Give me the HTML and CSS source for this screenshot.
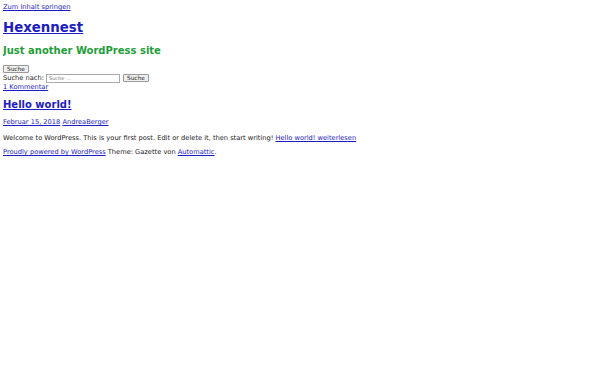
FILE: index.html
```html
<!DOCTYPE html>
<html lang="de">
<head>
    <meta charset="UTF-8">
    <meta name="viewport" content="width=device-width, initial-scale=1.0">
    <title>Hexennest – Just another WordPress site</title>
    <link rel="stylesheet" href="styles.css">
</head>
<body>
    <a class="skip-link" href="#content">Zum Inhalt springen</a>

    <header class="site-header">
        <h1 class="site-title"><a href="#">Hexennest</a></h1>
        <h2 class="site-description">Just another WordPress site</h2>
    </header>

    <div class="search-toggle">
        <button type="button">Suche</button>
    </div>
    <form class="search-form" role="search">
        <label for="s">Suche nach:</label>
        <input type="search" id="s" placeholder="Suche …">
        <button type="submit">Suche</button>
    </form>

    <main id="content">
        <article class="post">
            <a class="comments-link" href="#">1 Kommentar</a>
            <h2 class="entry-title"><a href="#">Hello world!</a></h2>
            <div class="entry-meta">
                <a href="#">Februar 15, 2018</a> <a href="#">AndreaBerger</a>
            </div>
            <p class="entry-summary">Welcome to WordPress. This is your first post. Edit or delete it, then start writing! <a href="#">Hello world! weiterlesen</a></p>
        </article>
    </main>

    <footer class="site-footer">
        <a href="#">Proudly powered by WordPress</a> Theme: Gazette von <a href="#">Automattic</a>.
    </footer>
</body>
</html>
```

FILE: styles.css
```css
body {
    margin: 3px;
    font-family: "DejaVu Sans", sans-serif;
    font-size: 6.67px;
    color: #1a1a1a;
    background: #fff;
}

a {
    color: #1c1cc4;
}

.skip-link {
    display: block;
    width: max-content;
}

.site-title {
    font-size: 13.33px;
    margin: 9px 0 0;
}

.site-description {
    font-size: 10px;
    color: #1f9e3a;
    margin: 10px 0 9px;
}

button {
    font-family: "DejaVu Sans", sans-serif;
    font-size: 5.8px;
    height: 8px;
    padding: 0 3px;
    border: 1px solid #999;
    border-radius: 1px;
    background: #efefef;
    color: #222;
}

.search-toggle {
    display: flex;
}

.search-form {
    display: flex;
    align-items: center;
    gap: 3px;
    height: 10px;
}

.search-form label {
    margin-right: -1px;
}

.search-form input {
    box-sizing: border-box;
    width: 74px;
    height: 9px;
    font-size: 5px;
    padding: 0 2px;
    border: 1px solid #aaa;
    font-family: "DejaVu Sans", sans-serif;
}

.comments-link {
    display: block;
    width: max-content;
}

.entry-title {
    font-size: 10px;
    margin: 8px 0;
}

.entry-meta {
    margin: 8px 0;
}

.entry-summary {
    margin: 8px 0 6px;
}

.site-footer {
    margin-top: 6px;
}
```
